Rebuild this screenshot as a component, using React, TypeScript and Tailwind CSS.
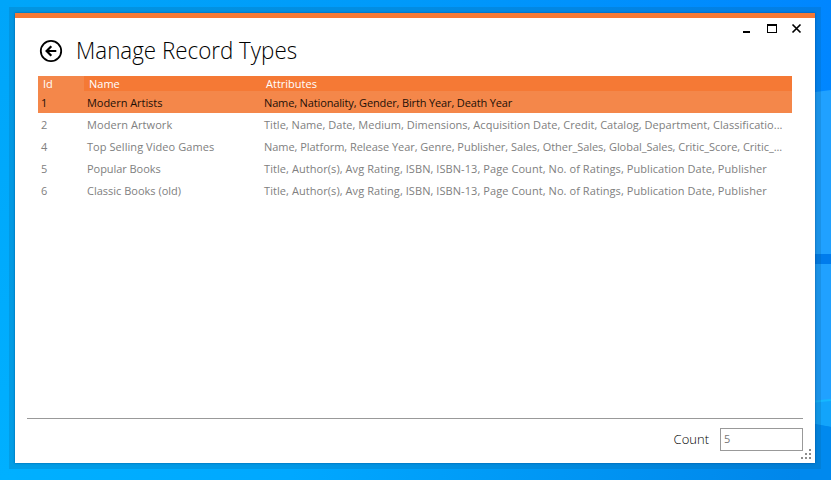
import React from "react";

const UI = "font-['Open_Sans','Noto_Sans',sans-serif]";

const rows = [
  { id: "1", name: "Modern Artists", attrs: "Name, Nationality, Gender, Birth Year, Death Year", nt: "tracking-[-0.05px]", at: "tracking-[-0.14px]" },
  { id: "2", name: "Modern Artwork", attrs: "Title, Name, Date, Medium, Dimensions, Acquisition Date, Credit, Catalog, Department, Classificatio...", nt: "tracking-[0.07px]", at: "tracking-[0.03px]" },
  { id: "4", name: "Top Selling Video Games", attrs: "Name, Platform, Release Year, Genre, Publisher, Sales, Other_Sales, Global_Sales, Critic_Score, Critic_...", nt: "tracking-[0.06px]", at: "tracking-[-0.04px]" },
  { id: "5", name: "Popular Books", attrs: "Title, Author(s), Avg Rating, ISBN, ISBN-13, Page Count, No. of Ratings, Publication Date, Publisher", nt: "tracking-[-0.05px]", at: "tracking-[0.07px]" },
  { id: "6", name: "Classic Books (old)", attrs: "Title, Author(s), Avg Rating, ISBN, ISBN-13, Page Count, No. of Ratings, Publication Date, Publisher", nt: "tracking-[0px]", at: "tracking-[0.07px]" },
];

function Wallpaper() {
  return (
    <svg className="absolute inset-0" width="831" height="480" viewBox="0 0 831 480">
      <defs>
        <linearGradient id="top" x1="0" x2="1" y1="0" y2="0">
          <stop offset="0" stopColor="#00a6f9" />
          <stop offset="0.5" stopColor="#0099fa" />
          <stop offset="1" stopColor="#0086ff" />
        </linearGradient>
        <linearGradient id="bottom" x1="0" x2="1" y1="0" y2="0">
          <stop offset="0" stopColor="#00b0ff" />
          <stop offset="0.35" stopColor="#00a8ff" />
          <stop offset="1" stopColor="#0084e9" />
        </linearGradient>
        <linearGradient id="left" x1="0" x2="0" y1="0" y2="1">
          <stop offset="0" stopColor="#00a5f9" />
          <stop offset="1" stopColor="#00b0ff" />
        </linearGradient>
      </defs>
      <rect width="831" height="240" fill="url(#top)" />
      <rect y="240" width="831" height="240" fill="url(#bottom)" />
      <rect width="15" height="480" fill="url(#left)" />
      <path d="M800 94L831 90V254H800Z" fill="#20a1ff" />
      <path d="M800 254H831V264H800Z" fill="#007cec" />
      <path d="M800 264H831V425L800 422Z" fill="#20a1ff" />
      <path d="M800 404L831 399V427L800 422Z" fill="#12a4fb" />
      <path d="M800 403L831 400" stroke="#16b8ff" strokeWidth="2" />
      <path d="M800 421L831 427V480H800Z" fill="#0089ee" />
    </svg>
  );
}

function BackButton() {
  return (
    <button aria-label="Back" className="mt-[1px] h-[24px] w-[24px] shrink-0">
      <svg width="24" height="24" viewBox="0 0 24 24" fill="none" stroke="#000" strokeWidth="1.8">
        <circle cx="12" cy="12" r="10.2" />
        <path d="M17.3 12H8" strokeWidth="2" />
        <path d="M12.3 7.3L7.6 12L12.3 16.7" strokeWidth="2.2" />
      </svg>
    </button>
  );
}

function WindowControls() {
  return (
    <div className="flex h-[20px] items-start justify-end pr-[13px]">
      <svg width="60" height="20" viewBox="0 0 60 20" shapeRendering="crispEdges">
        <path d="M1 13H8V15H1Z" fill="#000" />
        <path d="M25 6H35V15H25ZM26 8V14H34V8Z" fill="#000" fillRule="evenodd" />
        <path d="M50.5 6.5L58.5 14.5M58.5 6.5L50.5 14.5" stroke="#000" strokeWidth="1.7" shapeRendering="auto" />
      </svg>
    </div>
  );
}

function RecordTable() {
  return (
    <div className="ml-[23px] w-[754px] text-[11px] leading-[15px]">
      <div className="flex h-[15px] bg-[#f57935] text-white">
        <div className="w-[46px] bg-[#f4874a] pl-[5px]">Id</div>
        <div className="w-[177px] pl-[5px]">Name</div>
        <div className="pl-[5px]">Attributes</div>
      </div>
      {rows.map((r, i) => (
        <div
          key={r.id}
          className={"flex h-[22px] items-center whitespace-nowrap " + (i === 0 ? "bg-[#f4874a] text-[#1c1008]" : "text-[#808080]")}
        >
          <div className="w-[46px] pl-[3px]">{r.id}</div>
          <div className={"w-[177px] pl-[3px] " + r.nt}>{r.name}</div>
          <div className={"pl-[3px] " + r.at}>{r.attrs}</div>
        </div>
      ))}
    </div>
  );
}

function ResizeGrip() {
  return (
    <svg className="absolute bottom-[4px] right-[4px]" width="10" height="10" viewBox="0 0 10 10" fill="#8c8c8c" shapeRendering="crispEdges">
      <path d="M8 0h2v2h-2zM4 4h2v2h-2zM8 4h2v2h-2zM0 8h2v2h-2zM4 8h2v2h-2zM8 8h2v2h-2z" />
    </svg>
  );
}

export default function App() {
  return (
    <div className={"relative h-[480px] w-[831px] overflow-hidden bg-[#00a4fa] " + UI}>
      <Wallpaper />
      <div className="relative pl-[9px] pt-[7px]">
        <div className="h-[462px] w-[812px] bg-[rgba(8,96,140,0.22)] p-[6px]">
          <main className="relative flex h-[450px] w-[800px] flex-col border-t-[5px] border-[#f57935] bg-white shadow-[0_0_2px_rgba(0,50,110,0.6)]">
            <WindowControls />
            <header className="flex h-[38px] items-start pl-[24px]">
              <BackButton />
              <h1 className="ml-[13px] mt-[-4px] origin-left scale-x-[0.932] whitespace-nowrap text-[24px] font-light leading-[32px] text-black">Manage Record Types</h1>
            </header>
            <RecordTable />
            <div className="flex-1" />
            <footer className="mx-[12px] flex h-[45px] items-start justify-end border-t border-[#999]">
              <label className="mr-[11px] mt-[10px] text-[13px] font-light leading-[20px] text-black">Count</label>
              <div className="mt-[9px] h-[23px] w-[83px] border border-[#999] pl-[3px] text-[11px] leading-[20px] text-[#777]">5</div>
            </footer>
            <ResizeGrip />
          </main>
        </div>
      </div>
    </div>
  );
}
